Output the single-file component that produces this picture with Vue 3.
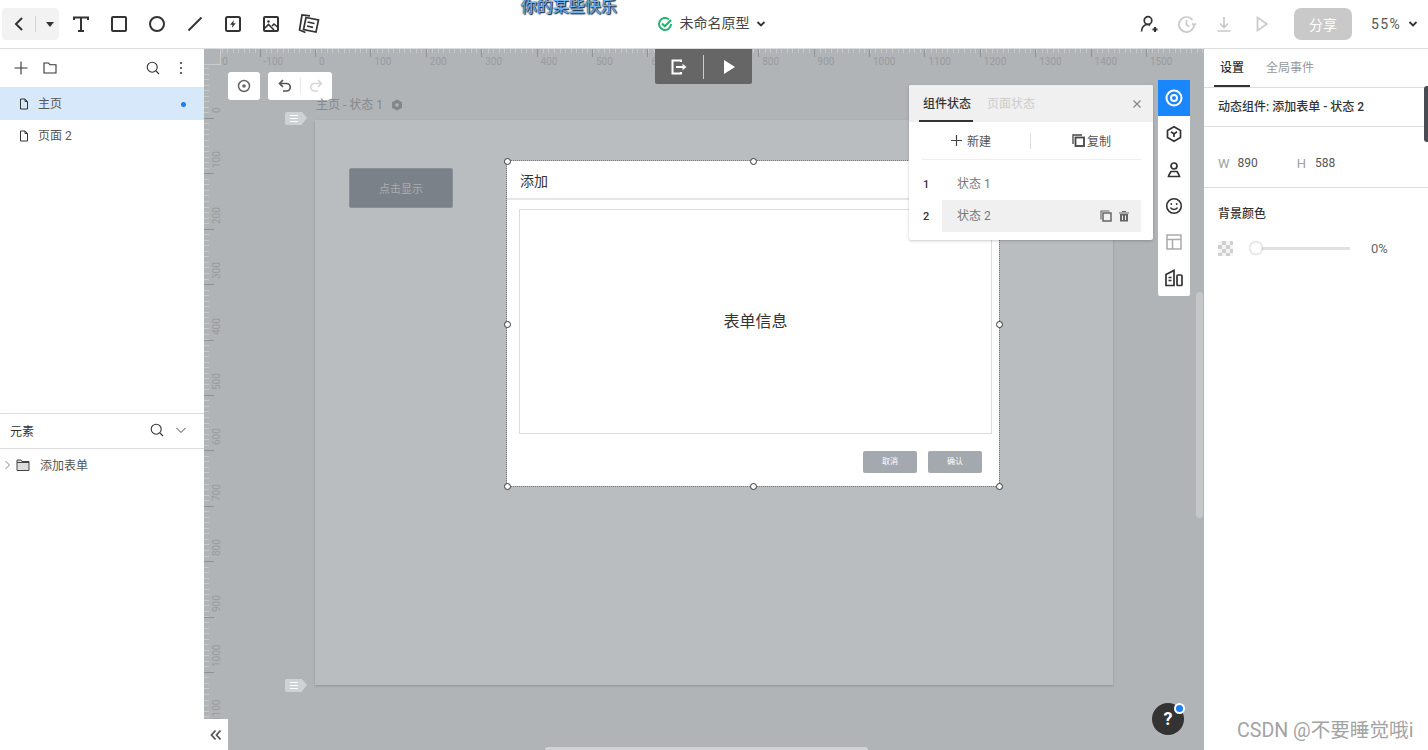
<template>
  <div class="app">
    <header class="topbar">
      <div class="top-left">
        <div class="back-group">
          <svg width="16" height="16" viewBox="0 0 16 16" fill="none" stroke="#333" stroke-width="2"><path d="M11 2 5 8l6 6" /></svg>
          <i class="back-sep"></i>
          <svg width="10" height="10" viewBox="0 0 10 10" fill="#333"><path d="M1 3h8L5 8z" /></svg>
        </div>
        <div class="tools">
          <svg width="20" height="20" viewBox="0 0 20 20" fill="none" stroke="#333" stroke-width="2"><path d="M3 6V3.500h14V6M10 3.500V17M7 17h6" /></svg>
          <svg width="20" height="20" viewBox="0 0 20 20" fill="none" stroke="#333" stroke-width="2"><rect x="3" y="3" width="14" height="14" rx="1" /></svg>
          <svg width="20" height="20" viewBox="0 0 20 20" fill="none" stroke="#333" stroke-width="2"><circle cx="10" cy="10" r="7" /></svg>
          <svg width="20" height="20" viewBox="0 0 20 20" fill="none" stroke="#333" stroke-width="2"><path d="M3.500 16.500 16.500 3.500" /></svg>
          <svg width="20" height="20" viewBox="0 0 20 20" fill="none"><rect x="3" y="3" width="14" height="14" rx="1.500" stroke="#333" stroke-width="2" /><path d="M11 6 7 10.800h2.500L8.800 14l4-4.800h-2.500z" fill="#333" /></svg>
          <svg width="20" height="20" viewBox="0 0 20 20" fill="none" stroke="#333" stroke-width="2"><rect x="3" y="3" width="14" height="14" rx="1" /><path d="m3.500 14.500 4-4 5.500 5.500M11 12l2-2 4 3.500" stroke-width="1.600" /><circle cx="7.500" cy="7.500" r="1.300" fill="#333" stroke="none" /></svg>
          <svg class="note-ico" width="24" height="24" viewBox="0 0 24 24" fill="none" stroke="#333" stroke-width="1.700"><path d="M8.500 20.500 2.500 18 5 3l8 .8" /><path d="M9 5.500 21.500 8 19 20 6.500 17.500z" fill="#fff" /><path d="m10.500 10 7 1.500M10 14l6 1.300" /></svg>
        </div>
      </div>
      <div class="top-center">
        <svg width="16" height="16" viewBox="0 0 16 16" fill="none"><path d="M14 8a6 6 0 1 1-2-4.500" stroke="#21b573" stroke-width="2" /><path d="m5 7.500 2.800 2.800L14 4" stroke="#21b573" stroke-width="2" /></svg>
        <span class="doc-name">未命名原型</span>
        <svg width="10" height="10" viewBox="0 0 10 10" fill="none" stroke="#333" stroke-width="1.800"><path d="m1.500 3 3.500 3.500L8.500 3" /></svg>
      </div>
      <div class="top-right">
        <svg class="r-icon" width="20" height="20" viewBox="0 0 20 20" fill="none" stroke="#333" stroke-width="1.700"><circle cx="9" cy="6.500" r="3.800" /><path d="M2.500 17.500c0-4 2.500-7 6-7 1.200 0 2 .3 2.800.8" /><path d="M13.500 15.500h5M16 13v5" stroke-width="2" /></svg>
        <svg class="r-icon" width="20" height="20" viewBox="0 0 20 20" fill="none" stroke="#c9c9c9" stroke-width="1.700"><path d="M17 10.500a7.500 7.500 0 1 1-1.500-4.500" /><path d="M9.500 6v5l3 1.500M19 9.500l-2 1.500-2-1.500" /></svg>
        <svg class="r-icon" width="20" height="20" viewBox="0 0 20 20" fill="none" stroke="#c9c9c9" stroke-width="1.700"><path d="M10 3v10M6 9.500l4 4 4-4M3.500 17h13" /></svg>
        <svg class="r-icon" width="20" height="20" viewBox="0 0 20 20" fill="none" stroke="#c9c9c9" stroke-width="1.700"><path d="M5.500 3.500v13L15 10z" /></svg>
        <button class="share">分享</button>
        <span class="zoom-val">55%</span>
        <svg width="10" height="10" viewBox="0 0 10 10" fill="none" stroke="#333" stroke-width="1.800"><path d="m1.500 3 3.500 3.500L8.500 3" /></svg>
      </div>
      <div class="song">你的某些快乐</div>
    </header>

    <div class="main">
      <aside class="left">
        <div class="pages">
          <div class="left-tools">
            <svg width="16" height="16" viewBox="0 0 16 16" fill="none" stroke="#333" stroke-width="1.100"><path d="M8 1.500v13M1.500 8h13" /></svg>
            <svg class="tool-folder" width="16" height="16" viewBox="0 0 16 16" fill="none" stroke="#333" stroke-width="1.100"><path d="M2 3h4.500L8 4.800h6V13H2z" /></svg>
            <span class="spacer"></span>
            <svg width="16" height="16" viewBox="0 0 16 16" fill="none" stroke="#333" stroke-width="1.100"><circle cx="7.200" cy="7.200" r="5" /><path d="m11 11 3 3" /></svg>
            <svg class="tool-more" width="16" height="16" viewBox="0 0 16 16" fill="#333"><circle cx="8" cy="3" r="1" /><circle cx="8" cy="8" r="1" /><circle cx="8" cy="13" r="1" /></svg>
          </div>
          <div v-for="page in pages" :key="page.name" class="page-row" :class="{ active: page.active }">
            <svg width="12" height="12" viewBox="0 0 12 12" fill="none" stroke="#333" stroke-width="1"><path d="M2.500 1h4.500L9.500 3.500V11h-7zM7 1v2.500h2.500" /></svg>
            <span>{{ page.name }}</span>
            <i v-if="page.active" class="page-dot"></i>
          </div>
        </div>
        <div class="elements">
          <div class="el-head">
            <span>元素</span>
            <span class="spacer"></span>
            <svg width="16" height="16" viewBox="0 0 16 16" fill="none" stroke="#333" stroke-width="1.100"><circle cx="7.200" cy="7.200" r="5" /><path d="m11 11 3 3" /></svg>
            <svg class="el-chev" width="12" height="12" viewBox="0 0 12 12" fill="none" stroke="#444" stroke-width="1"><path d="m1.500 4 4.500 4.500L10.500 4" /></svg>
          </div>
          <div class="el-row">
            <svg width="7" height="10" viewBox="0 0 7 10" fill="none" stroke="#888" stroke-width="1"><path d="m1.500 1 4 4-4 4" /></svg>
            <svg class="el-folder" width="14" height="14" viewBox="0 0 14 14" fill="none" stroke="#444" stroke-width="1"><path d="M1 2h4l1 1.500h7V12.500H1z" fill="#ddd" /><path d="M1 4.500h12" /></svg>
            <span>添加表单</span>
          </div>
        </div>
      </aside>

      <section class="canvas">
        <div class="ruler-h">
          <template v-for="v in hMarks" :key="v">
            <i class="h-tick" :style="{ left: 111 + v * 0.554 + 'px' }"></i>
            <span class="h-label" :style="{ left: 111 + v * 0.554 + 4 + 'px' }">{{ v }}</span>
          </template>
        </div>
        <div class="ruler-v">
          <template v-for="v in vMarks" :key="v">
            <i class="v-tick" :style="{ top: 69 + v * 0.554 + 'px' }"></i>
            <span class="v-label" :style="{ top: 69 + v * 0.554 - 5 + 'px' }">{{ v }}</span>
          </template>
        </div>
        <div class="ruler-corner"></div>

        <div class="float-btn focus-btn">
          <svg width="16" height="16" viewBox="0 0 16 16" fill="none" stroke="#666" stroke-width="1.500"><circle cx="8" cy="8" r="5.500" /><circle cx="8" cy="8" r="1.800" fill="#666" stroke="none" /></svg>
        </div>
        <div class="float-btn undo-btn">
          <svg width="16" height="16" viewBox="0 0 16 16" fill="none" stroke="#555" stroke-width="1.700"><path d="M6 2 2.500 5.500 6 9M3 5.500h6.500a3.500 3.500 0 0 1 0 7.500H6" /></svg>
          <i class="undo-sep"></i>
          <svg width="16" height="16" viewBox="0 0 16 16" fill="none" stroke="#d8d8d8" stroke-width="1.700"><path d="M10 2l3.500 3.500L10 9M13 5.500H6.500a3.500 3.500 0 0 0 0 7.500H10" /></svg>
        </div>

        <div class="preview">
          <svg width="18" height="18" viewBox="0 0 18 18" fill="none" stroke="#fff" stroke-width="2"><path d="M11 4V2.500H2.500v13H11V14" /><path d="M6 9h8" /><path d="m12.500 5.800 4 3.200-4 3.200z" fill="#fff" stroke="none" /></svg>
          <i class="preview-sep"></i>
          <svg width="14" height="16" viewBox="0 0 14 16" fill="#fff"><path d="M2 1v14l11-7z" /></svg>
        </div>

        <div class="page-label">
          主页 - 状态 1
          <svg width="12" height="12" viewBox="0 0 12 12"><path d="M6 .5 11 3.300v5.400L6 11.500 1 8.700V3.300z" fill="#83878c" /><circle cx="6" cy="6" r="1.800" fill="#b0b3b6" /></svg>
        </div>
        <div class="marker marker-top"><span></span></div>
        <div class="marker marker-bottom"><span></span></div>

        <div class="artboard">
          <div class="show-btn">点击显示</div>
          <div class="dialog">
            <div class="dialog-head">添加</div>
            <div class="dialog-body">
              <div class="form-box">表单信息</div>
              <div class="dialog-actions">
                <span class="mini-btn">取消</span>
                <span class="mini-btn">确认</span>
              </div>
            </div>
            <i v-for="h in handles" :key="h" class="handle" :class="h"></i>
          </div>
        </div>

        <div class="state-panel">
          <div class="state-tabs">
            <span class="state-tab on">组件状态</span>
            <span class="state-tab">页面状态</span>
            <svg class="state-close" width="10" height="10" viewBox="0 0 10 10" stroke="#888" stroke-width="1.200"><path d="m1.500 1.500 7 7M8.500 1.500l-7 7" /></svg>
          </div>
          <div class="state-actions">
            <div class="state-act new">
              <svg width="13" height="13" viewBox="0 0 13 13" stroke="#444" stroke-width="1.200"><path d="M6.500 1v11M1 6.500h11" /></svg>
              新建
            </div>
            <i class="state-sep"></i>
            <div class="state-act dup">
              <svg width="13" height="13" viewBox="0 0 13 13" fill="none" stroke="#444" stroke-width="1.300"><path d="M1 10V1h9" /><rect x="3.500" y="3.500" width="8.500" height="8.500" stroke-width="1.800" /></svg>
              复制
            </div>
          </div>
          <div class="state-list">
            <div v-for="s in states" :key="s.no" class="state-row">
              <b>{{ s.no }}</b>
              <div class="state-name" :class="{ on: s.active }">
                <span>{{ s.name }}</span>
                <template v-if="s.active">
                  <svg class="copy-ico" width="12" height="12" viewBox="0 0 12 12" fill="none" stroke="#666" stroke-width="1.100"><path d="M1 9.500V1h8.500" /><rect x="3" y="3" width="8" height="8" stroke-width="1.500" /></svg>
                  <svg width="12" height="12" viewBox="0 0 12 12" fill="#666"><path d="M1 2.500h10v1H1zM4 1h4v1H4zM2 4h8v7.500H2zM4 5.500v4.500h1V5.500zM7 5.500v4.500h1V5.500z" fill-rule="evenodd" /></svg>
                </template>
              </div>
            </div>
          </div>
        </div>

        <div class="side-tools">
          <div class="side-btn blue">
            <svg width="20" height="20" viewBox="0 0 20 20" fill="none" stroke="#fff" stroke-width="2"><circle cx="10" cy="10" r="7.500" /><circle cx="10" cy="10" r="3" /></svg>
          </div>
          <div class="side-btn">
            <svg width="18" height="18" viewBox="0 0 18 18" fill="none" stroke="#333" stroke-width="1.700"><path d="M9 1.800 15.500 5.500v7L9 16.200 2.500 12.500v-7z" /><path d="M6 6.800 9 9l3-2.200M9 9v3" /></svg>
          </div>
          <div class="side-btn">
            <svg width="18" height="18" viewBox="0 0 18 18" fill="none" stroke="#333" stroke-width="1.700"><circle cx="9" cy="5" r="3" /><path d="M6 10.500h6c1 1.500 2 3 2.500 5h-11c.5-2 1.500-3.500 2.500-5z" /></svg>
          </div>
          <div class="side-btn">
            <svg width="18" height="18" viewBox="0 0 18 18" fill="none" stroke="#333" stroke-width="1.600"><circle cx="9" cy="9" r="7.300" /><path d="M5.500 10.500c1 2.600 6 2.600 7 0" /><circle cx="6.300" cy="7" r=".9" fill="#333" stroke="none" /><circle cx="11.700" cy="7" r=".9" fill="#333" stroke="none" /></svg>
          </div>
          <div class="side-btn">
            <svg width="18" height="18" viewBox="0 0 18 18" fill="none" stroke="#aaa" stroke-width="1.500"><rect x="2" y="2" width="14" height="14" /><path d="M2 6.500h14M7.500 6.500V16" /></svg>
          </div>
          <div class="side-btn">
            <svg width="20" height="20" viewBox="0 0 20 20" fill="none" stroke="#333" stroke-width="1.700"><path d="M2 6.500 10 2.500V17.500H2z" /><rect x="13" y="7" width="5" height="10.500" rx="1" /><path d="M4.500 9.500h3M4.500 12.500h3" /></svg>
          </div>
        </div>

        <i class="scroll-v"></i>
        <i class="scroll-h"></i>

        <div class="collapse">
          <svg width="12" height="12" viewBox="0 0 12 12" fill="none" stroke="#555" stroke-width="1.800"><path d="M5.500 1.500 1.500 6l4 4.500M10.500 1.500 6.500 6l4 4.500" /></svg>
        </div>
        <div class="help">?<i></i></div>
      </section>

      <aside class="right">
        <div class="right-tabs">
          <span class="r-tab on">设置</span>
          <span class="r-tab">全局事件</span>
        </div>
        <div class="right-title">动态组件: 添加表单 - 状态 2</div>
        <div class="size-row">
          <span class="size-key">W</span><span class="size-val">890</span>
          <span class="size-key h">H</span><span class="size-val">588</span>
        </div>
        <div class="bg-sec">
          <div class="bg-title">背景颜色</div>
          <div class="bg-row">
            <i class="checker"></i>
            <div class="slider"><i></i></div>
            <span>0%</span>
          </div>
        </div>
        <i class="edge-tab"></i>
        <div class="watermark">CSDN @不要睡觉哦i</div>
      </aside>
    </div>
  </div>
</template>

<script setup>
const pages = [
  { name: '主页', active: true },
  { name: '页面 2', active: false }
]

const states = [
  { no: 1, name: '状态 1', active: false },
  { no: 2, name: '状态 2', active: true }
]

const hMarks = [-200, -100, 0, 100, 200, 300, 400, 500, 600, 700, 800, 900, 1000, 1100, 1200, 1300, 1400, 1500]
const vMarks = [0, 100, 200, 300, 400, 500, 600, 700, 800, 900, 1000, 1100]
const handles = ['tl', 'tm', 'tr', 'ml', 'mr', 'bl', 'bm', 'br']
</script>

<style scoped>
.app {
  width: 1428px;
  height: 750px;
  overflow: hidden;
  display: flex;
  flex-direction: column;
  font-family: Roboto, "Noto Sans CJK SC", sans-serif;
  color: #333;
  background: #fff;
}

.topbar {
  position: relative;
  height: 48px;
  flex: none;
  border-bottom: 1px solid #ddd;
  box-sizing: content-box;
  display: grid;
  grid-template-columns: 1fr auto 1fr;
  align-items: center;
  background: #fff;
}

.top-left {
  display: flex;
  align-items: center;
  padding-left: 2px;
}

.back-group {
  width: 57px;
  height: 32px;
  background: #f2f2f2;
  border-radius: 4px;
  display: flex;
  align-items: center;
  padding-left: 9px;
  box-sizing: border-box;
}

.back-sep {
  width: 1px;
  height: 16px;
  background: #d5d5d5;
  margin: 0 9px 0 8px;
}

.tools {
  display: flex;
  align-items: center;
  gap: 18px;
  margin-left: 12px;
}

.note-ico {
  margin-left: -2px;
  margin-right: -2px;
}

.top-center {
  display: flex;
  align-items: center;
  margin-right: 6px;
}

.doc-name {
  font-size: 14px;
  line-height: 18px;
  color: #444;
  margin: 0 6px 2px 7px;
}

.top-right {
  display: flex;
  align-items: center;
  justify-content: flex-end;
  padding-right: 10px;
}

.r-icon {
  margin-right: 17.500px;
}

.share {
  width: 58px;
  height: 32px;
  border: none;
  border-radius: 7px;
  background: #c9c9c9;
  color: #fff;
  font: 14px Roboto, "Noto Sans CJK SC", sans-serif;
  margin-left: 5px;
}

.zoom-val {
  font-size: 14px;
  letter-spacing: 1.300px;
  color: #555;
  margin: 0 7px 0 19px;
}

.song {
  position: absolute;
  left: 521px;
  top: -3px;
  font-size: 16px;
  line-height: 20px;
  color: #6fb4ee;
  text-shadow: 0 0 2px #10202f, 0 0 1px #10202f, 1px 1px 1px #1c2c44;
}

.main {
  flex: 1;
  display: flex;
  min-height: 0;
}

.left {
  width: 204px;
  flex: none;
  display: flex;
  flex-direction: column;
  background: #fff;
}

.pages {
  height: 364px;
  flex: none;
  border-bottom: 1px solid #ddd;
}

.left-tools {
  height: 38px;
  border-bottom: 1px solid #e4e4e4;
  display: flex;
  align-items: center;
  padding: 0 15px 0 13px;
}

.tool-folder {
  margin-left: 13px;
}

.tool-more {
  margin-left: 12px;
}

.spacer {
  flex: 1;
}

.page-row {
  height: 32px;
  display: flex;
  align-items: center;
  padding-left: 18px;
  font-size: 12px;
  color: #555;
  gap: 8px;
}

.page-row span {
  line-height: 16px;
  margin-bottom: 1px;
}

.page-row.active {
  background: #d7e8fb;
}

.page-dot {
  width: 5px;
  height: 5px;
  border-radius: 50%;
  background: #1a7ff0;
  margin-left: auto;
  margin-right: 18px;
}

.el-head {
  height: 35px;
  box-sizing: border-box;
  border-bottom: 1px solid #ddd;
  display: flex;
  align-items: center;
  padding: 0 17px 2px 10px;
  font-size: 12px;
}

.el-chev {
  margin-left: 10px;
}

.el-row {
  display: flex;
  align-items: center;
  height: 31px;
  padding-left: 4px;
  font-size: 12px;
  color: #555;
}

.el-folder {
  margin: 0 10px 0 5px;
}

.canvas {
  position: relative;
  flex: 1;
  background: #b1b4b7;
  overflow: hidden;
}

.ruler-h {
  position: absolute;
  left: 0;
  right: 0;
  top: 0;
  height: 16px;
  background: repeating-linear-gradient(90deg, #c6c8ca 0 1px, transparent 1px 5.540px) 1px 0 / 100% 4px no-repeat;
}

.h-tick {
  position: absolute;
  top: 0;
  width: 1px;
  height: 8px;
  background: #8f9295;
}

.h-label {
  position: absolute;
  top: 6px;
  font-size: 10px;
  line-height: 14px;
  color: #989b9e;
  white-space: nowrap;
}

.ruler-v {
  position: absolute;
  left: 0;
  top: 16px;
  bottom: 0;
  width: 18px;
  background: repeating-linear-gradient(180deg, #c6c8ca 0 1px, transparent 1px 5.540px) 0 3px / 5px 100% no-repeat;
}

.v-tick {
  position: absolute;
  left: 0;
  top: 0;
  width: 10px;
  height: 1px;
  margin-top: -16px;
  background: #8f9295;
}

.v-label {
  position: absolute;
  left: 8px;
  margin-top: -16px;
  font-size: 10px;
  line-height: 10px;
  color: #989b9e;
  writing-mode: vertical-rl;
  transform: translateY(-100%) rotate(180deg);
  white-space: nowrap;
}

.ruler-corner {
  position: absolute;
  left: 0;
  top: 0;
  width: 16px;
  height: 15px;
  border-right: 1px solid #c9cbcd;
  border-bottom: 1px solid #c9cbcd;
  background: #b1b4b7;
}

.float-btn {
  position: absolute;
  top: 23px;
  height: 28px;
  background: #fff;
  border-radius: 3px;
  display: flex;
  align-items: center;
  justify-content: center;
}

.focus-btn {
  left: 24px;
  width: 32px;
}

.undo-btn {
  left: 64px;
  width: 64px;
}

.undo-sep {
  width: 1px;
  height: 16px;
  background: #e8e8e8;
  margin: 0 7px;
}

.preview {
  position: absolute;
  left: 451px;
  top: 0;
  width: 97px;
  height: 35px;
  background: #666;
  border-radius: 0 0 2px 2px;
  display: flex;
  align-items: center;
  padding-left: 15px;
  box-sizing: border-box;
}

.preview-sep {
  width: 1px;
  height: 24px;
  background: #ccc;
  margin: 0 18px 0 15px;
}

.page-label {
  position: absolute;
  left: 112px;
  top: 48px;
  font-size: 12px;
  line-height: 16px;
  color: #85888c;
  display: flex;
  align-items: center;
  gap: 8px;
}

.marker {
  position: absolute;
  left: 81px;
  width: 17px;
  height: 13px;
  background: #cfd2d5;
  border-radius: 2px 0 0 2px;
}

.marker::after {
  content: "";
  position: absolute;
  left: 17px;
  top: 0;
  border-left: 5px solid #cfd2d5;
  border-top: 6.500px solid transparent;
  border-bottom: 6.500px solid transparent;
}

.marker span {
  position: absolute;
  left: 5px;
  top: 3px;
  width: 8px;
  height: 7px;
  border-top: 1px solid #fff;
  border-bottom: 1px solid #fff;
  box-sizing: border-box;
}

.marker span::after {
  content: "";
  position: absolute;
  left: 0;
  right: 0;
  top: 2px;
  height: 1px;
  background: #fff;
}

.marker-top {
  top: 63px;
}

.marker-bottom {
  top: 630px;
}

.artboard {
  position: absolute;
  left: 111px;
  top: 71px;
  width: 798px;
  height: 565px;
  background: #babdc0;
  box-shadow: 0 1px 2px rgba(0, 0, 0, .2);
}

.show-btn {
  position: absolute;
  left: 34px;
  top: 48px;
  width: 104px;
  height: 40px;
  background: #7b8188;
  border-radius: 2px;
  border: 1px solid #8a9097;
  box-sizing: border-box;
  color: #a9adb2;
  font-size: 11px;
  display: flex;
  align-items: center;
  justify-content: center;
}

.dialog {
  position: absolute;
  left: 192px;
  top: 41px;
  width: 492px;
  height: 325px;
  box-sizing: border-box;
  background: #fff;
  outline: 1px dotted #777;
  display: flex;
  flex-direction: column;
}

.dialog-head {
  height: 39px;
  flex: none;
  box-sizing: border-box;
  border-bottom: 2px solid #e6e6e6;
  padding-left: 13px;
  font-size: 14px;
  line-height: 40px;
  color: #333;
}

.dialog-body {
  flex: 1;
  padding: 9px 7px 0 12px;
}

.form-box {
  height: 225px;
  border: 1px solid #ddd;
  box-sizing: border-box;
  display: flex;
  align-items: center;
  justify-content: center;
  font-size: 16px;
  color: #333;
  padding-bottom: 3px;
}

.dialog-actions {
  display: flex;
  justify-content: flex-end;
  gap: 11px;
  margin-top: 17px;
  padding-right: 10px;
}

.mini-btn {
  width: 54px;
  height: 22px;
  background: #a3a9af;
  border-radius: 2px;
  color: #fff;
  font-size: 8px;
  line-height: 22px;
  text-align: center;
}

.handle {
  position: absolute;
  width: 7px;
  height: 7px;
  border: 1px solid #333;
  border-radius: 50%;
  background: #fff;
  box-sizing: border-box;
  margin: -3.500px 0 0 -3.500px;
}

.tl { left: 0; top: 0; }
.tm { left: 246px; top: 0; }
.tr { left: 492px; top: 0; }
.ml { left: 0; top: 163px; }
.mr { left: 492px; top: 163px; }
.bl { left: 0; top: 325px; }
.bm { left: 246px; top: 325px; }
.br { left: 492px; top: 325px; }

.state-panel {
  position: absolute;
  left: 705px;
  top: 36px;
  width: 244px;
  height: 155px;
  background: #fff;
  border-radius: 2px;
  box-shadow: 0 1px 3px rgba(0, 0, 0, .22);
}

.state-tabs {
  height: 37px;
  background: #f0f0f0;
  display: flex;
  align-items: center;
  padding-left: 10px;
  position: relative;
  border-radius: 2px 2px 0 0;
}

.state-tab {
  height: 37px;
  line-height: 38px;
  padding: 0 4px;
  margin-right: 10px;
  font-size: 12px;
  color: #ccc;
  box-sizing: border-box;
  width: 54px;
  white-space: nowrap;
}

.state-tab.on {
  color: #333;
  font-weight: 500;
  border-bottom: 2px solid #333;
}

.state-close {
  position: absolute;
  right: 11px;
  top: 14px;
}

.state-actions {
  height: 37px;
  margin: 0 12px;
  border-bottom: 1px solid #eee;
  display: flex;
  align-items: center;
}

.state-act {
  flex: 1;
  display: flex;
  align-items: center;
  justify-content: center;
  gap: 4px;
  font-size: 12px;
  color: #555;
}

.state-act.new {
  padding-right: 10px;
}

.state-act.dup {
  padding-left: 11px;
  gap: 2px;
}

.state-sep {
  width: 1px;
  height: 16px;
  background: #ddd;
}

.state-list {
  padding-top: 8px;
}

.state-row {
  height: 32px;
  display: flex;
  align-items: center;
  padding-left: 14px;
}

.state-row b {
  width: 19px;
  font-size: 11px;
  font-weight: 500;
  color: #333;
}

.state-name {
  width: 199px;
  height: 32px;
  display: flex;
  align-items: center;
  padding: 0 11px 0 15px;
  box-sizing: border-box;
  font-size: 12px;
  color: #777;
}

.state-name span {
  flex: 1;
  line-height: 16px;
  margin-bottom: 1px;
}

.state-name.on {
  background: #f0f0f0;
}

.copy-ico {
  margin-right: 6px;
}

.side-tools {
  position: absolute;
  left: 954px;
  top: 31px;
  width: 32px;
  height: 216px;
  background: #fff;
  border-radius: 0 0 2px 2px;
  display: flex;
  flex-direction: column;
}

.side-btn {
  height: 36px;
  display: flex;
  align-items: center;
  justify-content: center;
}

.side-btn.blue {
  background: #1a86fb;
}

.scroll-v {
  position: absolute;
  left: 992px;
  top: 243px;
  width: 7px;
  height: 226px;
  background: #c5c7c9;
  border-radius: 4px;
}

.scroll-h {
  position: absolute;
  left: 341px;
  top: 698px;
  width: 323px;
  height: 6px;
  background: #d0d2d4;
  border-radius: 3px;
}

.collapse {
  position: absolute;
  left: 0;
  top: 670px;
  width: 24px;
  height: 31px;
  background: #fff;
  display: flex;
  align-items: center;
  justify-content: center;
}

.help {
  position: absolute;
  left: 948px;
  top: 654px;
  width: 32px;
  height: 32px;
  border-radius: 50%;
  background: #333;
  color: #fff;
  font-size: 18px;
  font-weight: 700;
  line-height: 32px;
  text-align: center;
}

.help i {
  position: absolute;
  right: -1px;
  top: 0;
  width: 7px;
  height: 7px;
  border: 2px solid #fff;
  border-radius: 50%;
  background: #1a7ff0;
}

.right {
  position: relative;
  width: 224px;
  flex: none;
  background: #fff;
}

.right-tabs {
  height: 38px;
  border-bottom: 1px solid #ddd;
  display: flex;
  padding-left: 10px;
  gap: 16px;
}

.r-tab {
  height: 38px;
  width: 36px;
  text-align: center;
  white-space: nowrap;
  line-height: 38px;
  font-size: 12px;
  color: #999;
  box-sizing: border-box;
}

.r-tab:last-child {
  width: 48px;
}

.r-tab.on {
  color: #333;
  font-weight: 500;
  border-bottom: 2px solid #333;
}

.right-title {
  height: 39px;
  box-sizing: border-box;
  border-bottom: 1px solid #ddd;
  padding-left: 14px;
  font-size: 12px;
  font-weight: 500;
  line-height: 39px;
  color: #333;
}

.size-row {
  height: 61px;
  border-bottom: 1px solid #ddd;
  box-sizing: border-box;
  display: flex;
  align-items: center;
  padding: 12px 0 0 14px;
  font-size: 12px;
}

.size-key {
  color: #a0a0a0;
  font-size: 13px;
  margin-right: 8px;
}

.size-key.h {
  margin-left: 39px;
  margin-right: 9px;
}

.size-val {
  color: #555;
}

.bg-sec {
  padding: 16px 14px 0;
}

.bg-title {
  font-size: 12px;
  font-weight: 500;
  line-height: 20px;
  color: #333;
}

.bg-row {
  display: flex;
  align-items: center;
  margin-top: 17px;
  font-size: 13px;
  color: #666;
}

.checker {
  width: 15px;
  height: 15px;
  border-radius: 1px;
  background: repeating-conic-gradient(#cfcfcf 0 25%, #f4f4f4 0 50%) 0 0 / 8px 8px;
}

.slider {
  position: relative;
  width: 100px;
  height: 3px;
  background: #e2e2e2;
  margin: 0 21px 0 17px;
}

.slider i {
  position: absolute;
  left: 0;
  top: -5px;
  width: 12px;
  height: 12px;
  border-radius: 50%;
  background: #fff;
  box-shadow: 0 0 2px rgba(0, 0, 0, .45);
}

.edge-tab {
  position: absolute;
  right: 0;
  top: 37px;
  width: 4px;
  height: 56px;
  background: #484c52;
  border-radius: 3px 0 0 3px;
}

.watermark {
  position: absolute;
  left: 33px;
  top: 670px;
  font-size: 19.600px;
  line-height: 24px;
  color: #a3a3a3;
  white-space: nowrap;
}
</style>
